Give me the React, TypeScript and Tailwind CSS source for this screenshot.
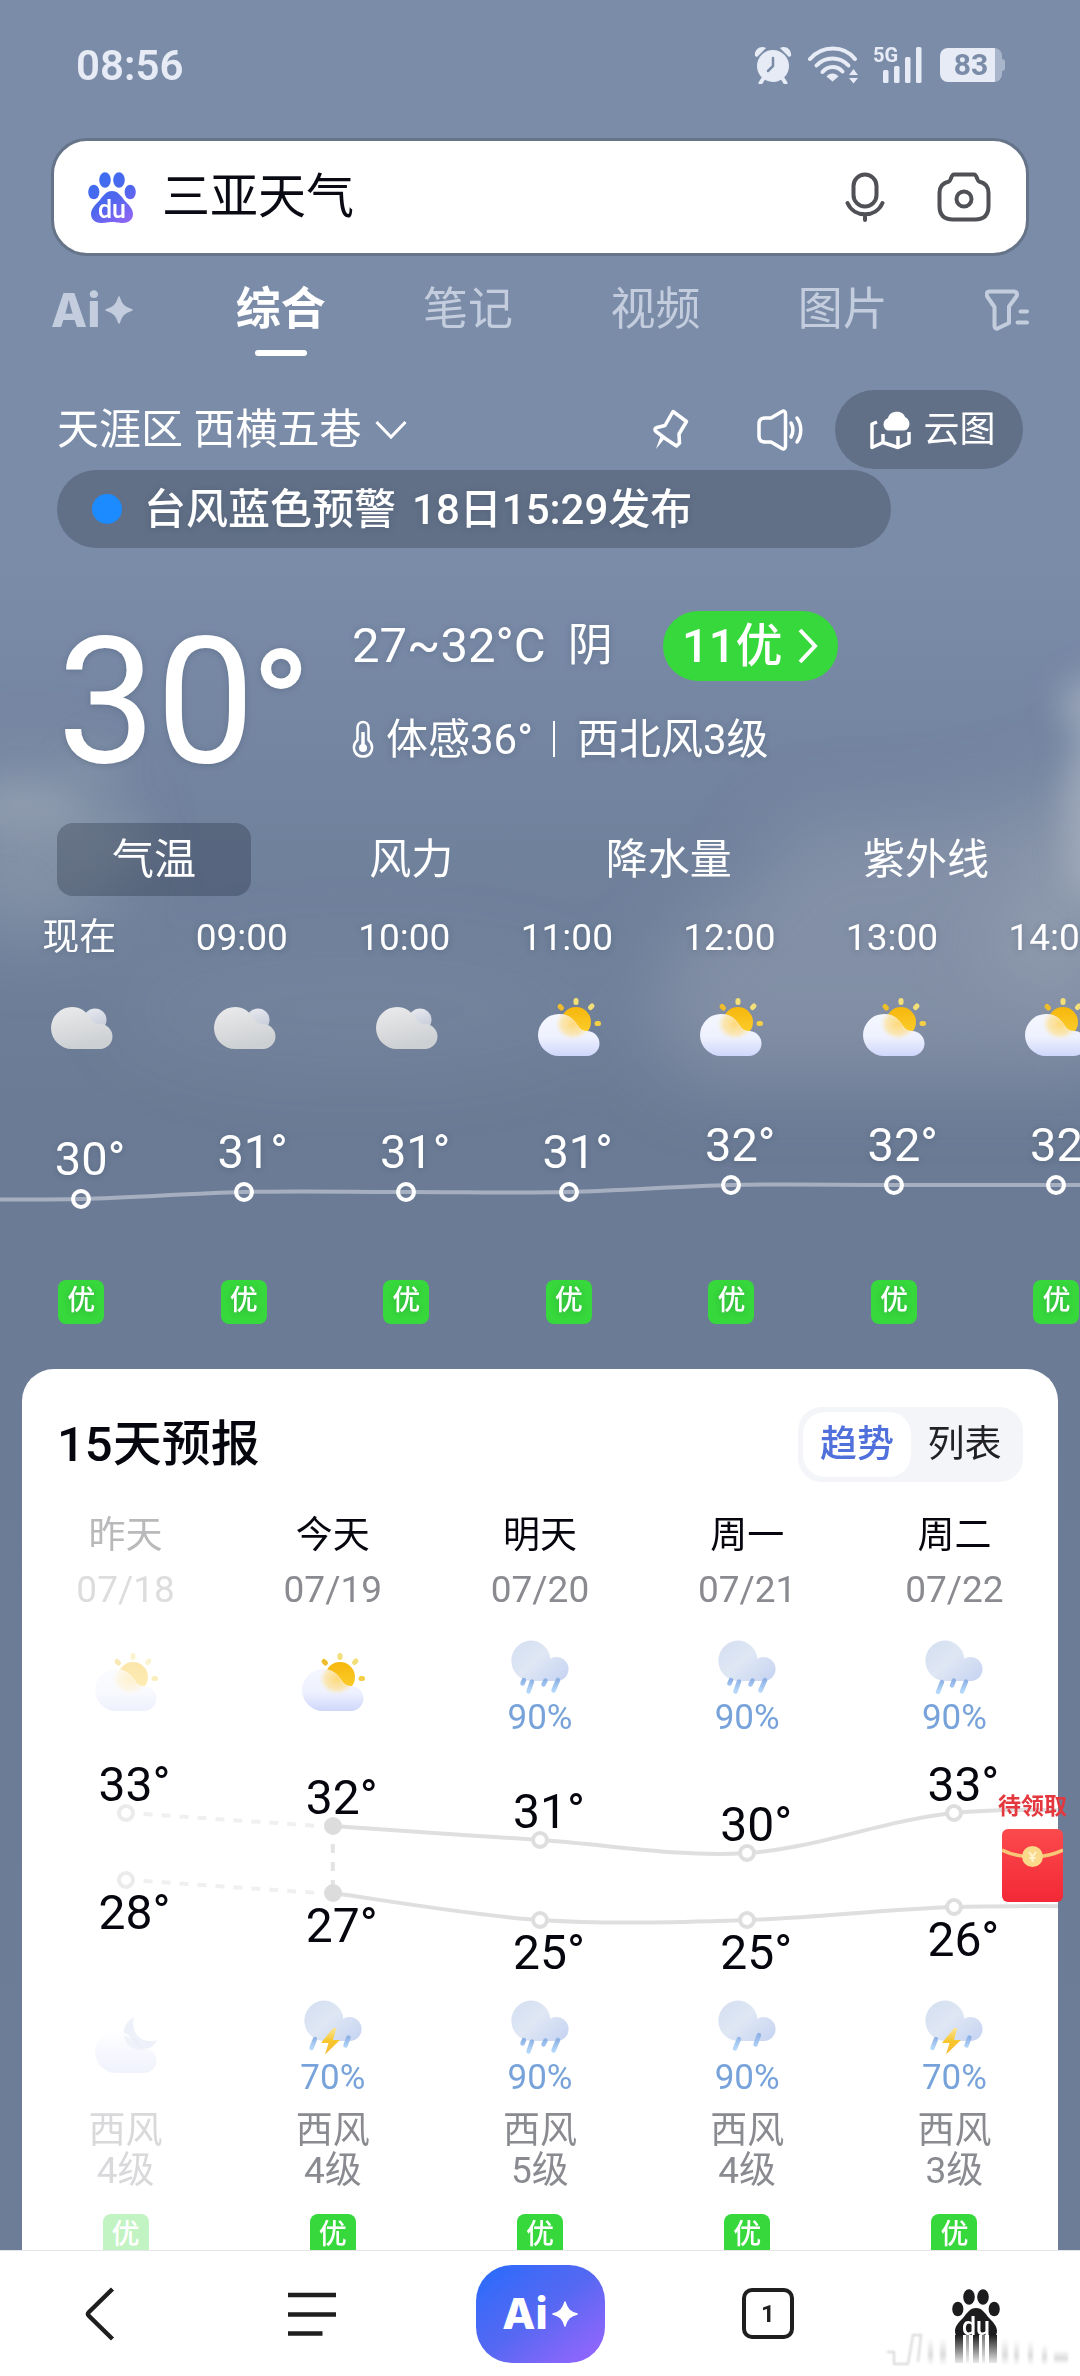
import { useId } from 'react';

type Weather = 'cloud' | 'sun' | 'moon' | 'rain4' | 'rain3' | 'rain2' | 'thunder';

const HOURS: { time: string; icon: Weather; temp: number }[] = [
  { time: '现在', icon: 'cloud', temp: 30 },
  { time: '09:00', icon: 'cloud', temp: 31 },
  { time: '10:00', icon: 'cloud', temp: 31 },
  { time: '11:00', icon: 'sun', temp: 31 },
  { time: '12:00', icon: 'sun', temp: 32 },
  { time: '13:00', icon: 'sun', temp: 32 },
  { time: '14:00', icon: 'sun', temp: 32 },
];

type Day = {
  name: string;
  date: string;
  day: Weather;
  dayRain?: string;
  high: number;
  low: number;
  night: Weather;
  nightRain?: string;
  level: string;
  past?: boolean;
  today?: boolean;
};

const DAYS: Day[] = [
  { name: '昨天', date: '07/18', day: 'sun', high: 33, low: 28, night: 'moon', level: '4级', past: true },
  { name: '今天', date: '07/19', day: 'sun', high: 32, low: 27, night: 'thunder', nightRain: '70%', level: '4级', today: true },
  { name: '明天', date: '07/20', day: 'rain4', dayRain: '90%', high: 31, low: 25, night: 'rain4', nightRain: '90%', level: '5级' },
  { name: '周一', date: '07/21', day: 'rain4', dayRain: '90%', high: 30, low: 25, night: 'rain2', nightRain: '90%', level: '4级' },
  { name: '周二', date: '07/22', day: 'rain3', dayRain: '90%', high: 33, low: 26, night: 'thunder', nightRain: '70%', level: '3级' },
];

const hourY = (t: number) => 142 - (t - 30) * 7;
const dayY = (t: number) => Math.round(78 + (33 - t) * 13.4);

/* Smooth curve through a list of points (Catmull-Rom converted to Bézier). */
function smooth(p: [number, number][]) {
  let d = `M${p[0][0]} ${p[0][1]}`;
  for (let i = 0; i < p.length - 1; i++) {
    const a = p[i - 1] ?? p[i];
    const b = p[i];
    const c = p[i + 1];
    const e = p[i + 2] ?? c;
    d += ` C${b[0] + (c[0] - a[0]) / 6} ${b[1] + (c[1] - a[1]) / 6} ${c[0] - (e[0] - b[0]) / 6} ${c[1] - (e[1] - b[1]) / 6} ${c[0]} ${c[1]}`;
  }
  return d;
}

const CLOUD = 'M21 0C30 0 36 5 40 12C42 15.500 45 17 49 17A12.500 12.500 0 0 1 49 42H21A21 21 0 0 1 21 0Z';

const DROPS: Record<string, string> = {
  rain4: 'M14 40L12.500 43.500M22 41.500L18.500 51.500M35.500 40.500L33.500 44.500M48 40L43.500 50.500',
  rain3: 'M18 42L14 52M30 40.500L28 45.500M42 41.500L38 51.500',
  rain2: 'M22 39L18 48.500M42 35L38.500 44.500',
  thunder: 'M12 39L8.500 48M45.500 37.500L42.500 45.500',
};

function WeatherIcon({ kind }: { kind: Weather }) {
  const id = useId();
  if (kind === 'cloud') {
    return (
      <svg viewBox="0 0 64 60" className="h-[60px] w-16" aria-hidden="true">
        <defs>
          <linearGradient id={id + 'a'} x1="0" y1="0" x2="0.300" y2="1">
            <stop offset="0" stopColor="#ebebec" />
            <stop offset="1" stopColor="#cdd0d3" />
          </linearGradient>
          <linearGradient id={id + 'b'} x1="0" y1="0" x2="0.300" y2="1">
            <stop offset="0" stopColor="#e9ebf0" />
            <stop offset="1" stopColor="#c6cbd9" />
          </linearGradient>
        </defs>
        <g transform="translate(2 10)">
          <circle cx="44" cy="13" r="11.500" fill={`url(#${id}b)`} />
          <path d={CLOUD} fill={`url(#${id}a)`} />
        </g>
      </svg>
    );
  }
  if (kind === 'sun') {
    return (
      <svg viewBox="0 0 64 60" className="h-[60px] w-16" aria-hidden="true">
        <defs>
          <linearGradient id={id + 'a'} x1="0" y1="0" x2="0" y2="1">
            <stop offset="0" stopColor="#f5f7ff" />
            <stop offset="0.550" stopColor="#eef1fe" />
            <stop offset="1" stopColor="#cfd7fb" />
          </linearGradient>
          <linearGradient id={id + 'b'} x1="0" y1="0" x2="0" y2="1">
            <stop offset="0" stopColor="#f6b70d" />
            <stop offset="1" stopColor="#fdd02f" />
          </linearGradient>
          <radialGradient id={id + 'c'}>
            <stop offset="0" stopColor="#ffd873" stopOpacity="0.950" />
            <stop offset="0.650" stopColor="#fbe3a3" stopOpacity="0.800" />
            <stop offset="1" stopColor="#fbeecb" stopOpacity="0" />
          </radialGradient>
          <clipPath id={id + 'd'}>
            <path d={CLOUD} transform="translate(1 17)" />
          </clipPath>
        </defs>
        <g stroke="#f4cf45" strokeWidth="5" strokeLinecap="round">
          <path d="M39 3.500V5.500" stroke="#f3df78" />
          <path d="M23 9.500L24.500 11" stroke="#eebd2b" />
          <path d="M55 9L53.500 10.500" stroke="#f3df78" />
          <path d="M60 26.500H61.500" />
        </g>
        <circle cx="39" cy="25" r="15" fill={`url(#${id}b)`} />
        <path d={CLOUD} transform="translate(1 17)" fill={`url(#${id}a)`} />
        <g clipPath={`url(#${id}d)`}>
          <ellipse cx="36" cy="27" rx="18" ry="16" fill={`url(#${id}c)`} />
        </g>
      </svg>
    );
  }
  if (kind === 'moon') {
    return (
      <svg viewBox="0 0 64 60" className="h-[60px] w-16" aria-hidden="true">
        <defs>
          <linearGradient id={id + 'a'} x1="0" y1="0" x2="0" y2="1">
            <stop offset="0" stopColor="#ffffff" />
            <stop offset="1" stopColor="#d6dbfb" />
          </linearGradient>
        </defs>
        <path d="M40 1C26 8 26 28 40 33C50 36 60 32 63 24C52 28 36 22 40 1Z" fill="#d3d8f1" />
        <path d={CLOUD} transform="translate(1 15)" fill={`url(#${id}a)`} />
        <path d="M30 20C31 30 42 36 52 33C46 32 44 24 38 22Z" fill="#bcc3ec" opacity="0.500" />
      </svg>
    );
  }
  return (
    <svg viewBox="-2 -2 64 60" className="h-[60px] w-16" aria-hidden="true">
      <defs>
        <linearGradient id={id + 'a'} x1="0" y1="0" x2="1" y2="0.800">
          <stop offset="0" stopColor="#d3def0" />
          <stop offset="0.500" stopColor="#dfe7f4" />
          <stop offset="1" stopColor="#c9d6f2" />
        </linearGradient>
        <linearGradient id={id + 'b'} x1="0" y1="0" x2="0" y2="1">
          <stop offset="0" stopColor="#8fb2e6" />
          <stop offset="1" stopColor="#b5d8fa" />
        </linearGradient>
        <linearGradient id={id + 'c'} x1="0" y1="0" x2="0" y2="1">
          <stop offset="0" stopColor="#f9e59a" />
          <stop offset="0.500" stopColor="#f7c62c" />
          <stop offset="1" stopColor="#f8b93a" />
        </linearGradient>
      </defs>
      <path
        d="M20.500 0.500A20 20 0 0 1 40.300 18.800A12 12 0 1 1 47.500 41H20A20.300 20.300 0 0 1 20.500 0.500Z"
        fill={`url(#${id}a)`}
      />
      <path d={DROPS[kind]} stroke={`url(#${id}b)`} strokeWidth="4.500" strokeLinecap="round" fill="none" />
      {kind === 'thunder' && <path d="M30 28L18 43H25.500L22 54.500L37 40H30L33.500 28Z" fill={`url(#${id}c)`} />}
    </svg>
  );
}

function Paw({ className, mono = false }: { className: string; mono?: boolean }) {
  const id = useId();
  const fill = mono ? '#1c1c1e' : `url(#${id}p)`;
  return (
    <svg viewBox="0 0 48 51" className={className} aria-hidden="true">
      <defs>
        <linearGradient id={id + 'p'} gradientUnits="userSpaceOnUse" x1="10" y1="5" x2="40" y2="50">
          <stop offset="0" stopColor="#3d6df0" />
          <stop offset="0.500" stopColor="#4f66ee" />
          <stop offset="1" stopColor="#9165f5" />
        </linearGradient>
      </defs>
      <g fill={fill}>
        <ellipse cx="5.800" cy="20" rx="5.600" ry="7.300" />
        <ellipse cx="17" cy="8" rx="5.800" ry="7.700" />
        <ellipse cx="31" cy="8" rx="5.800" ry="7.700" />
        <ellipse cx="42.200" cy="20" rx="5.600" ry="7.300" />
        <path d="M24 19C30 19 33 24 37 29C41 33 45 37 45 42C45 48 40 51 35 51C30 51 28 50 24 50C20 50 18 51 13 51C8 51 3 48 3 42C3 37 7 33 11 29C15 24 18 19 24 19Z" />
      </g>
      <text x="24" y="46" textAnchor="middle" fontSize="25" fontWeight="500" fill="#fff" fontFamily="Roboto, sans-serif">
        du
      </text>
    </svg>
  );
}

function AiMark({ star }: { star: string }) {
  return (
    <span className="flex items-center font-[Inter,sans-serif] font-extrabold">
      Ai
      <svg viewBox="0 0 28 28" className={star} aria-hidden="true">
        <path d="M14 1C16.500 9 19 11.500 27 14C19 16.500 16.500 19 14 27C11.500 19 9 16.500 1 14C9 11.500 11.500 9 14 1Z" fill="currentColor" stroke="currentColor" strokeWidth="1.500" strokeLinejoin="round" />
      </svg>
    </span>
  );
}

function StatusBar() {
  return (
    <div className="flex h-[130px] shrink-0 items-center justify-between pr-[75px] pl-[76px] text-[#e6ebf5]">
      <span className="text-[42px] font-semibold">08:56</span>
      <div className="flex items-center gap-4">
        <svg viewBox="0 0 38 38" className="h-[38px] w-[38px]" fill="currentColor" aria-label="闹钟">
          <circle cx="19" cy="20" r="16" />
          <path d="M1 10C0 4 6-1 12 2L3 11ZM37 10C38 4 32-1 26 2L35 11Z" />
          <path d="M9 33L6.500 37M29 33L31.500 37" stroke="currentColor" strokeWidth="4" strokeLinecap="round" />
          <path d="M19 12V20L14 25" stroke="#7b8ca8" strokeWidth="2.500" strokeLinecap="round" fill="none" />
        </svg>
        <svg viewBox="0 0 51 38" className="h-[38px] w-[51px]" fill="none" stroke="currentColor" strokeWidth="4" strokeLinecap="round" aria-label="无线网络">
          <path d="M2 13C14-1 36-1 47 13" />
          <path d="M8.500 19.500C17 10 32 10 40.500 19.500" />
          <path d="M14.500 26C20 19.500 29 19.500 34.500 25.500" />
          <path d="M24.500 35.500L18.500 30.500C21.500 26.500 27.500 26.500 30.500 30.500Z" fill="currentColor" stroke="none" />
          <path d="M45.500 23L50 29H41ZM45.500 37.500L50 32H41Z" fill="currentColor" stroke="none" />
        </svg>
        <svg viewBox="0 0 49 38" className="h-[38px] w-[49px] overflow-visible" fill="currentColor" aria-label="5G">
          <text x="-2" y="16" fontSize="20" fontWeight="700" fontFamily="Roboto, sans-serif">
            5G
          </text>
          <rect x="8" y="24" width="5.500" height="13" rx="1.500" />
          <rect x="19" y="20" width="5.500" height="17" rx="1.500" />
          <rect x="30" y="11" width="5.500" height="26" rx="1.500" />
          <rect x="41" y="1" width="5.500" height="36" rx="1.500" />
        </svg>
        <span className="flex items-center">
          <span className="flex h-[34px] w-[62px] items-center justify-center rounded-lg bg-gradient-to-r from-[#e6ebf5] from-88% to-[#a9b5ca] to-88% text-[30px] leading-8 font-bold text-[#7b8ca8]">
            83
          </span>
          <span className="h-3 w-[3px] rounded-r-sm bg-[#a9b5ca]" />
        </span>
      </div>
    </div>
  );
}

function SearchBar() {
  return (
    <form className="mx-[51px] mt-2 flex h-[118px] shrink-0 items-center rounded-[36px] border-3 border-[#667489] bg-white pr-[35px] pl-[34px]">
      <Paw className="h-[51px] w-12 shrink-0" />
      <input
        aria-label="搜索"
        defaultValue="三亚天气"
        className="ml-[26px] min-w-0 flex-1 bg-transparent text-[48px] text-[#0a0a14] outline-none"
      />
      <button type="button" aria-label="语音搜索">
        <svg viewBox="0 0 40 50" className="h-[50px] w-10" fill="none" stroke="#505156" strokeWidth="4" strokeLinecap="round">
          <rect x="8.500" y="2.500" width="23" height="32" rx="11.500" />
          <path d="M2.500 31C9 46 31 46 37.500 31M20 43V48" />
        </svg>
      </button>
      <button type="button" aria-label="拍照搜索" className="ml-[52px]">
        <svg viewBox="0 0 54 50" className="h-[50px] w-[54px]" fill="none" stroke="#505156" strokeWidth="4" strokeLinejoin="round">
          <path d="M17 2.500H37C40 2.500 40 9 42 9.500C49 11 51.500 15 51.500 21V34C51.500 43 47 47.500 38 47.500H16C7 47.500 2.500 43 2.500 34V21C2.500 15 5 11 12 9.500C14 9 14 2.500 17 2.500Z" />
          <circle cx="27" cy="27" r="7.500" />
        </svg>
      </button>
    </form>
  );
}

function TopTabs() {
  return (
    <nav className="flex h-[108px] shrink-0 items-center justify-between px-[51px] text-[45px] text-[#c3cddd]">
      <button type="button" aria-label="Ai" className="pr-1.5 text-[47px]">
        <AiMark star="ml-1 h-7 w-7" />
      </button>
      <button type="button" className="relative font-bold text-white">
        综合
        <span className="absolute inset-x-[19px] -bottom-3 h-1.5 rounded-full bg-white" />
      </button>
      <button type="button">笔记</button>
      <button type="button">视频</button>
      <button type="button">图片</button>
      <button type="button" aria-label="筛选">
        <svg viewBox="0 0 44 42" className="h-[42px] w-11" fill="none" stroke="currentColor" strokeWidth="4" strokeLinejoin="round" strokeLinecap="round">
          <path d="M4 2.500H29C32 2.500 33 5.500 31 8L24 17.500V34L12.500 39.500C11 40 9.500 39 9.500 37V18L2.500 8C1 5.500 1.500 2.500 4 2.500Z" />
          <path d="M35.500 22.500H42M32.500 33.500H42" />
        </svg>
      </button>
    </nav>
  );
}

function Location() {
  return (
    <div className="mx-[57px] mt-[26px] flex h-[79px] shrink-0 items-center">
      <button type="button" className="flex items-center gap-3.5 text-[42px]">
        天涯区 西横五巷
        <svg viewBox="0 0 32 20" className="h-5 w-8" fill="none" stroke="currentColor" strokeWidth="3">
          <path d="M1.500 2L16 17L30.500 2" />
        </svg>
      </button>
      <button type="button" aria-label="定位" className="mr-[68px] ml-auto">
        <svg viewBox="0 0 38 42" className="h-[42px] w-[38px]" fill="none" stroke="currentColor" strokeWidth="3.500" strokeLinejoin="round">
          <path d="M22 2.500L35.500 12.500L28 25L28.500 34L25.500 37L15 30L5 22.500C3 21 4 19 6 18.500L14 16.500Z" />
          <path d="M14 29L5 40L10 26Z" fill="currentColor" stroke="none" />
        </svg>
      </button>
      <button type="button" aria-label="播报" className="mr-8">
        <svg viewBox="0 0 46 42" className="h-[42px] w-[46px]" fill="none" stroke="currentColor" strokeWidth="3.500" strokeLinejoin="round" strokeLinecap="round">
          <path d="M25 2.500C27 1.500 28.500 2.500 28.500 5V37C28.500 39.500 27 40.500 25 39.500L14 33H8C4 33 2 31 2 27V15C2 11 4 9 8 9H14Z" />
          <path d="M34 14C36.500 18 36.500 24 34 28M40 9C45 16 45 26 40 33" />
        </svg>
      </button>
      <button type="button" className="flex h-[79px] w-[188px] items-center justify-center gap-3 rounded-full bg-[#617087] pl-2 text-[36px]">
        <svg viewBox="0 0 41 40" className="h-10 w-[41px]" aria-hidden="true">
          <path d="M7 12L2 14V37.500L13 32.500L28 37.500L39 33V22M13 24V32M28 26V37" fill="none" stroke="currentColor" strokeWidth="3.500" strokeLinejoin="round" />
          <path d="M19 20.500C13 20.500 11 11 18 8C20 0 33 0 35 7C42 10 40 20.500 34 20.500Z" fill="currentColor" />
        </svg>
        云图
      </button>
    </div>
  );
}

function Current() {
  return (
    <section className="mt-[63px] flex shrink-0 items-end pl-[57px]">
      <div className="flex w-[295px] items-baseline text-[176px] leading-[112px]">
        30<span className="-ml-1 text-[158px] leading-[112px] font-medium">°</span>
      </div>
      <div className="flex flex-col gap-[33px]">
        <div className="flex h-[70px] items-center">
          <span className="text-[49px]">27~32°C</span>
          <span className="ml-[22px] text-[45px]">阴</span>
          <button type="button" className="ml-[50px] flex h-[70px] w-[175px] items-center justify-center gap-4 rounded-full bg-[#36d83b] text-[47px] font-medium">
            11优
            <svg viewBox="0 0 20 36" className="h-9 w-5" fill="none" stroke="currentColor" strokeWidth="4">
              <path d="M2 2L17 18L2 34" />
            </svg>
          </button>
        </div>
        <div className="flex h-[50px] items-center text-[42px]">
          <svg viewBox="0 0 22 38" className="mr-3 h-[38px] w-[22px]" fill="none" stroke="currentColor" strokeWidth="2.500" aria-hidden="true">
            <path d="M5.500 8C5.500 0 16.500 0 16.500 8V20C23 26 20 36.500 11 36.500C2 36.500-1 26 5.500 20Z" />
            <path d="M11 12V28" strokeWidth="3.500" />
            <circle cx="11" cy="28" r="4" fill="currentColor" stroke="none" />
          </svg>
          体感36°
          <span className="mr-[22px] ml-5 h-9 w-0.5 bg-white" />
          西北风3级
        </div>
      </div>
    </section>
  );
}

function Badge({ faded = false }: { faded?: boolean }) {
  return (
    <span
      className={`flex h-11 w-[46px] items-center justify-center rounded-lg bg-[#36d83b] pb-0.5 text-[28px] font-medium text-white ${faded ? 'opacity-30' : ''}`}
    >
      优
    </span>
  );
}

function Hourly() {
  const points = HOURS.map((h, i): [number, number] => [81 + i * 162.5, hourY(h.temp)]);
  const line = smooth([[-81, 142], ...points, [1218, hourY(32)]]);
  return (
    <section className="mt-5 shrink-0 overflow-hidden">
      <div className="relative flex">
        <svg viewBox="0 0 1080 223" preserveAspectRatio="none" className="absolute inset-x-0 top-[141px] h-[223px] w-full" aria-hidden="true">
          <path d={line} fill="none" stroke="#fff" strokeOpacity="0.400" strokeWidth="4" />
        </svg>
        {HOURS.map((h) => (
          <div key={h.time} className="flex w-[15.05%] shrink-0 flex-col items-center">
            <span className="flex h-11 items-center pr-1 text-[37px] whitespace-nowrap">{h.time}</span>
            <div className="mt-[37px]">
              <WeatherIcon kind={h.icon} />
            </div>
            <div className="flex h-[223px] flex-col items-center" style={{ paddingTop: hourY(h.temp) - 64 }}>
              <span className="relative text-[47px] leading-[48px]">
                {h.temp}
                <span className="absolute top-0 left-full">°</span>
              </span>
              <span className="mt-1.5 h-5 w-5 rounded-full border-4 border-white bg-[#6c7c97]" />
            </div>
            <Badge />
          </div>
        ))}
      </div>
    </section>
  );
}

function Precipitation({ icon, rain, faded }: { icon: Weather; rain?: string; faded?: boolean }) {
  return (
    <div className={`flex h-[98px] flex-col items-center justify-center gap-1 ${faded ? 'opacity-35' : ''}`}>
      <div className={icon === 'sun' ? 'pb-2' : ''}>
        <WeatherIcon kind={icon} />
      </div>
      {rain && <span className="text-[35px] leading-8 text-[#78a3da]">{rain}</span>}
    </div>
  );
}

function DayDot({ day, past }: { day: boolean; past: boolean }) {
  return (
    <span
      className={`h-[18px] w-[18px] rounded-full border-4 ${day ? 'border-[#dcdcdc] bg-[#dcdcdc]' : past ? 'border-[#ebebeb] bg-white' : 'border-[#dedede] bg-white'}`}
    />
  );
}

function Forecast() {
  const xs = [0, 1, 2, 3, 4].map((i) => 103.6 + i * 207.2);
  const curve = (key: 'high' | 'low', next: number) =>
    smooth([...DAYS.slice(1).map((d, i): [number, number] => [xs[i + 1], dayY(d[key])]), [1139, dayY(next)]]);
  const dash = (key: 'high' | 'low') => `M${xs[0] + 18} ${dayY(DAYS[0][key]) + 1}L${xs[1] - 14} ${dayY(DAYS[1][key])}`;
  return (
    <section className="mx-[22px] mt-[45px] shrink-0 overflow-hidden rounded-t-[32px] bg-white pt-[38px] text-[#06060f]">
      <header className="flex h-[75px] items-center justify-between pr-[35px] pl-[35px]">
        <h2 className="text-[49px] font-medium">15天预报</h2>
        <div className="flex h-[75px] items-center rounded-3xl bg-[#f4f5f9] p-[5px] text-[37px]">
          <button type="button" className="h-[65px] w-[108px] rounded-[22px] bg-white font-medium text-[#5070dc]">
            趋势
          </button>
          <button type="button" className="h-[65px] w-[107px] text-[#222226]">
            列表
          </button>
        </div>
      </header>
      <div className="relative mt-[34px] grid grid-cols-5">
        <svg viewBox="0 0 1036 262" preserveAspectRatio="none" className="absolute inset-x-0 top-[219px] h-[262px] w-full" fill="none" strokeWidth="4" aria-hidden="true">
          <path d={curve('high', 33)} stroke="#dfdfdf" />
          <path d={curve('low', 26)} stroke="#dfdfdf" />
          <path d={dash('high')} stroke="#f0f0f0" strokeDasharray="9 9" />
          <path d={dash('low')} stroke="#f0f0f0" strokeDasharray="9 9" />
          <path d={`M${xs[1]} ${dayY(32) + 18}V${dayY(27)}`} stroke="#e3e3e3" strokeDasharray="9 9" />
        </svg>
        {DAYS.map((d) => (
          <div key={d.date} className="relative flex flex-col items-center text-[37px] leading-10">
            <span className={d.past ? 'text-[#b9b9bb]' : ''}>{d.name}</span>
            <span className={`mt-3.5 ${d.past ? 'text-[#dddddd]' : 'text-[#8a8b90]'}`}>{d.date}</span>
            <div className="mt-[27px]">
              <Precipitation icon={d.day} rain={d.dayRain} faded={d.past} />
            </div>
            <div
              className="flex h-[262px] flex-col items-center text-[48px] leading-[48px]"
              style={{ paddingTop: dayY(d.high) - 52 }}
            >
              <span className="relative">
                {d.high}
                <span className="absolute top-0 left-full">°</span>
              </span>
              <span className="-mt-[5px] flex">
                <DayDot day={!!d.today} past={!!d.past} />
              </span>
              <span className="flex" style={{ marginTop: dayY(d.low) - dayY(d.high) - 18 }}>
                <DayDot day={!!d.today} past={!!d.past} />
              </span>
              <span className="relative">
                {d.low}
                <span className="absolute top-0 left-full">°</span>
              </span>
            </div>
            <Precipitation icon={d.night} rain={d.nightRain} faded={d.past} />
            <span className={`mt-4 text-center ${d.past ? 'text-[#d9d9db]' : 'text-[#8a8b90]'}`}>
              西风
              <br />
              {d.level}
            </span>
            <div className="mt-[23px]">
              <Badge faded={d.past} />
            </div>
          </div>
        ))}
      </div>
    </section>
  );
}

function RedPacket() {
  return (
    <button type="button" className="absolute top-[1793px] right-[13px] flex flex-col items-center gap-2 text-[23px] leading-7 font-bold text-[#e5383e]">
      待领取
      <svg viewBox="0 0 61 73" className="h-[73px] w-[61px]" aria-hidden="true">
        <defs>
          <linearGradient id="packet" x1="0" y1="0" x2="0" y2="1">
            <stop offset="0" stopColor="#fb4a4d" />
            <stop offset="1" stopColor="#f32836" />
          </linearGradient>
        </defs>
        <rect width="61" height="73" rx="6" fill="url(#packet)" />
        <path d="M0 21C18 30 43 30 61 21" fill="none" stroke="#f8c877" strokeWidth="3.500" />
        <circle cx="30.500" cy="27.500" r="10.500" fill="#fbd98a" />
        <path d="M27 23L30.500 27.500L34 23M30.500 27.500V33M27.500 29H33.500" fill="none" stroke="#fff3cf" strokeWidth="2" />
      </svg>
    </button>
  );
}

function BottomNav() {
  return (
    <nav className="relative grid h-[126px] shrink-0 grid-cols-[200fr_224fr_232fr_224fr_200fr] items-center justify-items-center border-t border-[#e6e6e8] bg-white text-[#1f1f1f]">
      <button type="button" aria-label="返回">
        <svg viewBox="0 0 30 54" className="h-[54px] w-[30px]" fill="none" stroke="currentColor" strokeWidth="4.500" strokeLinejoin="round">
          <path d="M27.500 2L4 25C2.500 26.500 2.500 27.500 4 29L27.500 52" />
        </svg>
      </button>
      <button type="button" aria-label="菜单">
        <svg viewBox="0 0 48 44" className="h-11 w-12" stroke="currentColor" strokeWidth="4.500">
          <path d="M0 3H48M0 22.500H48M0 41.500H34.500" />
        </svg>
      </button>
      <button
        type="button"
        aria-label="Ai"
        className="flex h-[98px] w-[129px] items-center justify-center rounded-[36px] bg-gradient-to-br from-[#1f6bfc] via-[#5568f2] to-[#9a64ff] text-[43px] text-white"
      >
        <AiMark star="ml-1 h-[26px] w-[26px]" />
      </button>
      <button type="button" className="flex h-[51px] w-[52px] items-center justify-center rounded-[10px] border-4 border-current text-[24px] font-bold">
        1
      </button>
      <button type="button" aria-label="首页" className="relative mt-6 mr-2">
        <div className="h-[46px] overflow-hidden">
          <Paw className="h-[51px] w-12" mono />
        </div>
        <svg viewBox="0 0 48 28" className="h-7 w-12" aria-hidden="true">
          <defs>
            <linearGradient id="streak" x1="0" y1="0" x2="0" y2="1">
              <stop offset="0" stopColor="#1c1c1e" />
              <stop offset="1" stopColor="#1c1c1e" stopOpacity="0.100" />
            </linearGradient>
          </defs>
          <g fill="url(#streak)">
            <rect x="3" width="8" height="28" />
            <rect x="14" width="3" height="28" opacity="0.500" />
            <rect x="21" width="6" height="28" />
            <rect x="30" width="3" height="28" opacity="0.600" />
            <rect x="37" width="8" height="28" />
          </g>
        </svg>
      </button>
      <svg viewBox="0 0 188 34" className="pointer-events-none absolute right-2 bottom-2.5 h-[34px] w-[188px]" aria-hidden="true">
        <defs>
          <linearGradient id="haze" x1="0" y1="0" x2="0" y2="1">
            <stop offset="0" stopColor="#9a9a9e" stopOpacity="0" />
            <stop offset="0.600" stopColor="#9a9a9e" stopOpacity="0.350" />
            <stop offset="1" stopColor="#9a9a9e" stopOpacity="0" />
          </linearGradient>
          <filter id="soft">
            <feGaussianBlur stdDeviation="1.200" />
          </filter>
        </defs>
        <g filter="url(#soft)">
          <path d="M3 20H10V32H24L29 3H37L34 30" fill="none" stroke="#d6d6d9" strokeWidth="2" />
          <g fill="url(#haze)">
            <rect x="44" y="6" width="5" height="28" />
            <rect x="56" y="6" width="6" height="28" />
            <rect x="118" y="6" width="6" height="28" />
            <rect x="130" y="8" width="5" height="26" />
            <rect x="144" y="8" width="5" height="26" />
            <rect x="158" y="12" width="5" height="22" />
            <rect x="170" y="18" width="14" height="14" />
          </g>
        </g>
      </svg>
    </nav>
  );
}

function Sky() {
  return (
    <svg viewBox="0 0 1080 640" preserveAspectRatio="none" className="pointer-events-none absolute inset-x-0 top-[600px] h-[640px] w-full" aria-hidden="true">
      <defs>
        <filter id="b1" x="-50%" y="-50%" width="200%" height="200%">
          <feGaussianBlur stdDeviation="38" />
        </filter>
        <filter id="b2" x="-50%" y="-50%" width="200%" height="200%">
          <feGaussianBlur stdDeviation="16" />
        </filter>
      </defs>
      <g fill="#a3acba" filter="url(#b1)">
        <path d="M1120 180L1020 200L910 220L800 220L750 290L670 340L640 420L690 480L1120 480Z" opacity="0.380" />
        <path d="M1120 130L1070 210L1020 310L960 360L1120 410Z" opacity="0.420" />
        <ellipse cx="30" cy="250" rx="90" ry="90" opacity="0.400" />
        <ellipse cx="360" cy="410" rx="240" ry="60" opacity="0.120" />
      </g>
      <g fill="#b4bcc9" filter="url(#b2)">
        <path d="M1120 65L1078 80L1056 104L1080 135L1066 190L1072 290L1120 300Z" opacity="0.600" />
        <ellipse cx="20" cy="205" rx="60" ry="24" opacity="0.250" />
        <ellipse cx="95" cy="165" rx="30" ry="26" opacity="0.120" />
        <ellipse cx="110" cy="240" rx="50" ry="34" opacity="0.120" />
      </g>
    </svg>
  );
}

export default function App() {
  return (
    <div className="relative flex h-screen flex-col overflow-hidden bg-[linear-gradient(180deg,#7b8ca8_0px,#7b8ca9_560px,#70819c_860px,#6b7b95_1120px,#6d7d97_100%)] font-[Roboto,'Noto_Sans_CJK_SC',sans-serif] text-white">
      <Sky />
      <main className="relative flex min-h-0 flex-1 flex-col overflow-hidden">
        <StatusBar />
        <SearchBar />
        <TopTabs />
        <div className="flex shrink-0 flex-col [text-shadow:0_1px_6px_rgba(40,55,80,0.25)]">
          <Location />
          <div className="mt-px mr-[189px] ml-[57px] flex h-[78px] shrink-0 items-center rounded-full bg-[#617087] pl-[35px] text-[42px] font-medium">
            <span className="mr-[22px] h-[30px] w-[30px] rounded-full bg-[#1b8bff]" />
            <span>台风蓝色预警</span>
            <span className="ml-4">18日15:29发布</span>
          </div>
          <Current />
          <div className="mt-[59px] mr-[57px] ml-[57px] flex shrink-0 justify-between text-[42px]">
            {['气温', '风力', '降水量', '紫外线'].map((t, i) => (
              <button
                key={t}
                type="button"
                className={`h-[73px] w-[194px] rounded-2xl ${i === 0 ? 'bg-[#1e2837]/30' : ''}`}
              >
                {t}
              </button>
            ))}
          </div>
          <Hourly />
        </div>
        <Forecast />
        <RedPacket />
      </main>
      <BottomNav />
    </div>
  );
}
